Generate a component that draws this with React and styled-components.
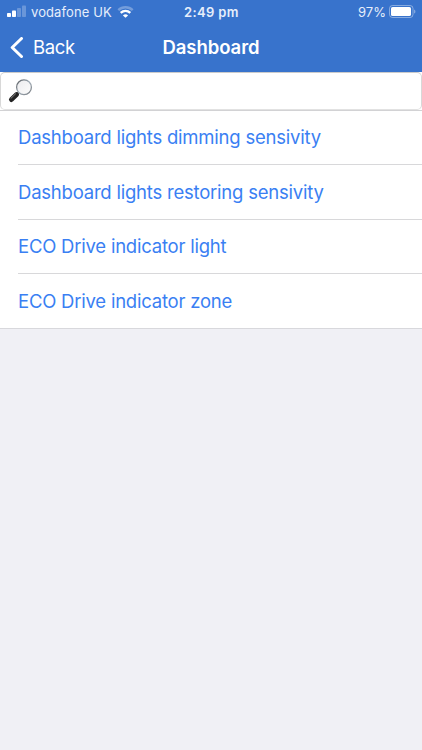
import React from 'react';
import styled, { createGlobalStyle } from 'styled-components';

const GlobalStyle = createGlobalStyle`
  * {
    box-sizing: border-box;
  }
  body {
    margin: 0;
    background: #f0f0f5;
    font-family: Inter, "Liberation Sans", sans-serif;
  }
`;

const Screen = styled.div`
  width: 100%;
  min-height: 750px;
  background: #f0f0f5;
`;

const Header = styled.header`
  height: 72px;
  background: #3873cc;
  color: #fff;
`;

const StatusBar = styled.div`
  height: 23px;
  display: grid;
  grid-template-columns: 1fr auto 1fr;
  align-items: center;
  padding: 0 6px 0 7px;
  font-size: 13px;
  line-height: 22px;
  color: #e6eefb;
`;

const StatusGroup = styled.div`
  display: flex;
  align-items: center;
  justify-content: ${props => props.$end ? 'flex-end' : 'flex-start'};
  gap: ${props => props.$gap}px;
  svg {
    display: block;
    flex: none;
  }
`;

const StatusText = styled.span`
  white-space: nowrap;
  letter-spacing: ${props => props.$spacing || '0'};
`;

const Time = styled.span`
  font-weight: 600;
  letter-spacing: 0.35px;
`;

const NavBar = styled.nav`
  height: 49px;
  display: grid;
  grid-template-columns: 1fr auto 1fr;
  align-items: center;
  padding: 0 10px;
`;

const BackButton = styled.button`
  display: flex;
  align-items: center;
  gap: 9px;
  padding: 0;
  border: none;
  background: none;
  color: #fff;
  font-family: inherit;
  font-size: 18.5px;
  line-height: 24px;
  letter-spacing: -0.35px;
`;

const BackLabel = styled.span`
  padding-bottom: 2px;
`;

const Title = styled.h1`
  margin: 0;
  padding-bottom: 2px;
  font-size: 18.5px;
  line-height: 24px;
  font-weight: 600;
  letter-spacing: -0.05px;
`;

const SearchArea = styled.div`
  background: #fff;
  border-bottom: 1px solid #d2d2d4;
`;

const SearchField = styled.label`
  height: 38px;
  display: flex;
  align-items: center;
  padding-left: 7px;
  border: 1px solid #d8d8d8;
  border-top-color: #cbcbcb;
  border-bottom-color: #e2e2e2;
  border-radius: 5px;
`;

const SearchInput = styled.input`
  flex: 1;
  border: none;
  outline: none;
  background: none;
  font-size: 18px;
`;

const List = styled.ul`
  margin: 0;
  padding: 0 0 0 18px;
  list-style: none;
  background: #fff;
  border-bottom: 1px solid #d8d8dc;
`;

const Item = styled.li`
  height: 53.4px;
  display: flex;
  align-items: center;
  padding-bottom: 1px;
  font-size: 18.5px;
  line-height: 24px;
  letter-spacing: -0.22px;
  white-space: nowrap;
  color: #3a7ff3;
  & + & {
    height: 54.5px;
    border-top: 1px solid #d8d8da;
  }
`;

const items = [
  'Dashboard lights dimming sensivity',
  'Dashboard lights restoring sensivity',
  'ECO Drive indicator light',
  'ECO Drive indicator zone',
];

function SignalIcon() {
  return (
    <svg width="19" height="13" viewBox="0 0 19 13" fill="#fff">
      <rect x="0" y="8" width="4" height="4" rx="0.8"/>
      <rect x="5" y="5.5" width="4" height="6.5" rx="0.8"/>
      <rect x="10" y="3" width="4" height="9" rx="0.8" opacity="0.25"/>
      <rect x="15" y="0.5" width="4" height="11.5" rx="0.8" opacity="0.25"/>
    </svg>
  );
}

function WifiIcon() {
  return (
    <svg width="17" height="12" viewBox="0 0 16 12" fill="none" strokeWidth="2.4">
      <path d="M0.8 4.2C4.8 0.3 11.2 0.3 15.2 4.2" stroke="#fff" opacity="0.3"/>
      <path d="M3.2 6.9C6 4.3 10 4.3 12.8 6.9" stroke="#fff"/>
      <path d="M8 11.8L5.4 9.4C7 8 9 8 10.6 9.4Z" fill="#fff"/>
    </svg>
  );
}

function BatteryIcon() {
  return (
    <svg width="27" height="13" viewBox="0 0 27 13">
      <rect x="0.5" y="0.5" width="23.5" height="12" rx="3" fill="none" stroke="#fff" opacity="0.4"/>
      <rect x="2" y="2" width="20" height="9" rx="1.6" fill="#fff"/>
      <path d="M25.2 4.4C26.8 5 26.8 8 25.2 8.6Z" fill="#fff" opacity="0.45"/>
    </svg>
  );
}

function ChevronIcon() {
  return (
    <svg width="14" height="22" viewBox="0 0 14 22" fill="none" stroke="#fff" strokeWidth="3" strokeLinecap="round" strokeLinejoin="round">
      <path d="M11.5 1.5L2.2 10.5L11.5 19.5"/>
    </svg>
  );
}

function MagnifierIcon() {
  return (
    <svg width="25" height="24" viewBox="0 0 25 24">
      <defs>
        <linearGradient id="lens" x1="0" y1="0" x2="1" y2="1">
          <stop offset="0" stopColor="#ececee"/>
          <stop offset="1" stopColor="#fcfcfc"/>
        </linearGradient>
        <linearGradient id="rim" x1="0" y1="0" x2="1" y2="1">
          <stop offset="0" stopColor="#55585c"/>
          <stop offset="0.5" stopColor="#a3afb9"/>
          <stop offset="1" stopColor="#777b80"/>
        </linearGradient>
      </defs>
      <path d="M11 13.2L8 16.2" stroke="#666" strokeWidth="2.4"/>
      <path d="M8.6 15.6L3.4 20.6" stroke="#242424" strokeWidth="4.8" strokeLinecap="round"/>
      <path d="M7.6 14.8L3 19.3" stroke="#858585" strokeWidth="1" strokeLinecap="round"/>
      <circle cx="16" cy="8.2" r="7.4" fill="url(#lens)" stroke="url(#rim)" strokeWidth="1.3"/>
    </svg>
  );
}

export default function App() {
  return (
    <Screen>
      <GlobalStyle/>
      <Header>
        <StatusBar>
          <StatusGroup $gap={5}>
            <SignalIcon/>
            <StatusText $spacing="0.1px">vodafone UK</StatusText>
            <WifiIcon/>
          </StatusGroup>
          <Time>2:49 pm</Time>
          <StatusGroup $gap={3} $end>
            <StatusText>97%</StatusText>
            <BatteryIcon/>
          </StatusGroup>
        </StatusBar>
        <NavBar>
          <BackButton type="button">
            <ChevronIcon/>
            <BackLabel>Back</BackLabel>
          </BackButton>
          <Title>Dashboard</Title>
        </NavBar>
      </Header>
      <SearchArea>
        <SearchField>
          <MagnifierIcon/>
          <SearchInput type="text" aria-label="Search"/>
        </SearchField>
      </SearchArea>
      <List>
        {items.map(item => <Item key={item}>{item}</Item>)}
      </List>
    </Screen>
  );
}
